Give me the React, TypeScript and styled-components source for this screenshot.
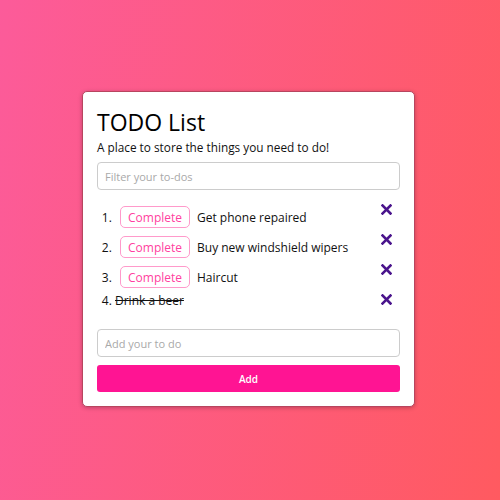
import React, { useState } from 'react';
import styled, { createGlobalStyle } from 'styled-components';

const GlobalStyle = createGlobalStyle`
  html, body {
    margin: 0;
    padding: 0;
  }
  body {
    font-family: 'Open Sans', 'Liberation Sans', sans-serif;
  }
`;

const Page = styled.div`
  width: 500px;
  height: 500px;
  box-sizing: border-box;
  padding-top: 91px;
  background: linear-gradient(100deg, #fc5b9a 0%, #ff5a60 100%);
`;

const Card = styled.div`
  width: 333px;
  margin-left: 82px;
  box-sizing: border-box;
  padding: 15px 14px 14px;
  background: #fff;
  border: 1px solid #b8455f;
  border-radius: 5px;
  box-shadow: 0 1px 4px rgba(0, 0, 0, 0.25);
`;

const Title = styled.h1`
  margin: 0;
  font-size: 23px;
  font-weight: 400;
  line-height: 30px;
  color: #000;
`;

const Subtitle = styled.p`
  margin: 0 0 5px;
  font-size: 11.8px;
  line-height: 20px;
  color: #111;
`;

const TextInput = styled.input`
  display: block;
  width: 100%;
  height: 28px;
  box-sizing: border-box;
  padding: 0 7px;
  font-family: 'Open Sans', 'Liberation Sans', sans-serif;
  font-size: 11px;
  color: #333;
  border: 1px solid #ccc;
  border-radius: 4px;
  outline: none;

  &::placeholder {
    color: #a9a9a9;
  }
`;

const List = styled.ol`
  margin: 12px 0 20px;
  padding-left: 18px;
  font-size: 12px;
  color: #111;
`;

const Item = styled.li`
  display: list-item;
  line-height: 17px;
`;

const Row = styled.div`
  display: flex;
  align-items: center;
`;

const CompleteButton = styled.button`
  margin: 4px 7px 4px 5px;
  height: 22px;
  padding: 0 7px;
  font-family: 'Open Sans', 'Liberation Sans', sans-serif;
  font-size: 12px;
  color: #ff3fa0;
  background: #fff;
  border: 1px solid #ff9acb;
  border-radius: 5px;
  cursor: pointer;
`;

const Label = styled.span<{ $done: boolean }>`
  flex: 1;
  text-decoration: ${(p) => (p.$done ? 'line-through' : 'none')};
`;

const RemoveButton = styled.button`
  align-self: flex-start;
  margin: 1px 8px 0 0;
  padding: 0;
  width: 12px;
  height: 12px;
  border: none;
  background: none;
  cursor: pointer;
  display: flex;
  align-items: center;
  justify-content: center;
`;

const AddButton = styled.button`
  display: block;
  width: 100%;
  height: 27px;
  margin-top: 8px;
  font-family: 'Open Sans', 'Liberation Sans', sans-serif;
  font-size: 10px;
  font-weight: 600;
  color: #fff;
  background: #ff1493;
  border: none;
  border-radius: 3px;
  cursor: pointer;
`;

const Cross = () => (
  <svg width="11" height="11" viewBox="0 0 11 11">
    <path d="M1.5 1.5 L9.5 9.5 M9.5 1.5 L1.5 9.5" stroke="#4a148c" strokeWidth="2.6" strokeLinecap="square" />
  </svg>
);

type Todo = { text: string; done: boolean };

const initialTodos: Todo[] = [
  { text: 'Get phone repaired', done: false },
  { text: 'Buy new windshield wipers', done: false },
  { text: 'Haircut', done: false },
  { text: 'Drink a beer', done: true },
];

export default function App() {
  const [todos, setTodos] = useState<Todo[]>(initialTodos);

  return (
    <>
      <GlobalStyle />
      <Page>
        <Card>
          <Title>TODO List</Title>
          <Subtitle>A place to store the things you need to do!</Subtitle>
          <TextInput type="text" placeholder="Filter your to-dos" />
          <List>
            {todos.map((todo, i) => (
              <Item key={todo.text}>
                <Row>
                  {!todo.done && (
                    <CompleteButton
                      onClick={() =>
                        setTodos(todos.map((t, j) => (j === i ? { ...t, done: true } : t)))
                      }
                    >
                      Complete
                    </CompleteButton>
                  )}
                  <Label $done={todo.done}>{todo.text}</Label>
                  <RemoveButton onClick={() => setTodos(todos.filter((_, j) => j !== i))}>
                    <Cross />
                  </RemoveButton>
                </Row>
              </Item>
            ))}
          </List>
          <TextInput type="text" placeholder="Add your to do" />
          <AddButton>Add</AddButton>
        </Card>
      </Page>
    </>
  );
}
